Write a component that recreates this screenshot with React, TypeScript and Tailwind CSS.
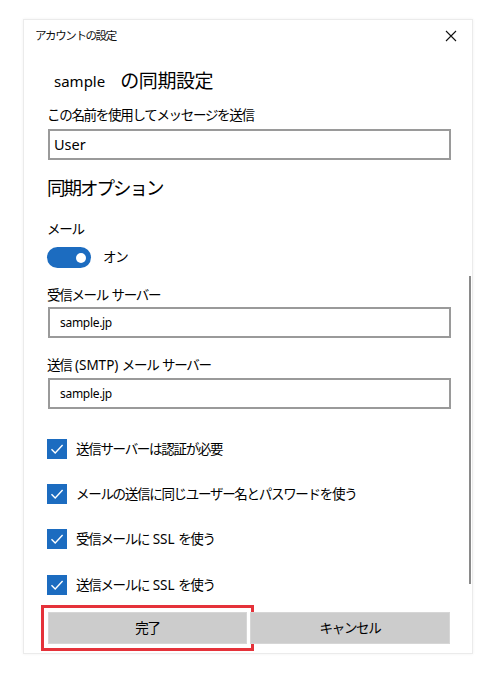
import React from "react";

function T({ text }: { text: string }) {
  const parts = text.split(/([ -~]+)/).filter((p) => p.length > 0);
  return (
    <>
      {parts.map((p, i) =>
        /^[ -~]+$/.test(p) ? (
          <span key={i} className="tracking-[0px]">
            {p}
          </span>
        ) : (
          <span key={i}>{p}</span>
        )
      )}
    </>
  );
}

function Check() {
  return (
    <div className="w-[20px] h-[20px] bg-[#1c6cc0] flex items-center justify-center shrink-0">
      <svg width="14" height="14" viewBox="0 0 14 14" fill="none">
        <path d="M1.5 7.2 L5.2 11 L12.6 3" stroke="white" strokeWidth="1.4" />
      </svg>
    </div>
  );
}

const label = "text-[13.5px] tracking-[-1.3px] text-black whitespace-pre";

function CheckRow({ text, className }: { text: string; className: string }) {
  return (
    <div className={`flex items-center h-[20px] ${className}`}>
      <Check />
      <span className={`ml-[9px] leading-[20px] ${label}`}>
        <T text={text} />
      </span>
    </div>
  );
}

function Field({ value, small }: { value: string; small?: boolean }) {
  return (
    <div className={`h-[31px] w-[403px] border-2 border-[#9a9a9a] flex items-center ${small ? "pl-[10px]" : "pl-[4px]"}`}>
      <span className={small ? "text-[12px] tracking-[-0.3px] text-black" : "text-[14.5px] text-black"}>{value}</span>
    </div>
  );
}

export default function App() {
  return (
    <div className="w-[496px] h-[674px] bg-white pt-[19px] pl-[23px] font-['Noto_Sans','Noto_Sans_CJK_JP',sans-serif]">
      <div className="relative w-[450px] h-[635px] bg-white border border-[#ebebeb] shadow-[0_0_3px_rgba(0,0,0,0.06)] flex flex-col">
        <div className="h-[31px] flex items-center justify-between pl-[11px] pr-[15px]">
          <span className="text-[11.5px] tracking-[-1.4px] text-[#111]">アカウントの設定</span>
          <svg width="12" height="12" viewBox="0 0 12 12">
            <path d="M1 1 L11 11 M11 1 L1 11" stroke="#111" strokeWidth="1.1" />
          </svg>
        </div>
        <div className="flex flex-col pl-[23px]">
          <div className="mt-[15px] h-[30px] flex items-center">
            <span className="ml-[7px] text-[15px] text-black">sample</span>
            <span className="ml-[15px] text-[19px] tracking-[-0.4px] text-black">の同期設定</span>
          </div>
          <div className={`mt-[9px] h-[20px] flex items-center ${label}`}>この名前を使用してメッセージを送信</div>
          <div className="mt-[4px] ml-[1px]">
            <Field value="User" />
          </div>
          <div className="mt-[14px] h-[28px] flex items-center text-[18.5px] tracking-[-2px] text-black">同期オプション</div>
          <div className={`mt-[17px] h-[20px] flex items-center ${label}`}>メール</div>
          <div className="mt-[8px] h-[21px] flex items-center">
            <div className="w-[44px] h-[21px] rounded-full bg-[#1c6cc0] flex items-center justify-end pr-[5px]">
              <div className="w-[10px] h-[10px] rounded-full bg-white" />
            </div>
            <span className={`ml-[12px] ${label}`}>オン</span>
          </div>
          <div className={`mt-[17px] h-[20px] flex items-center ${label}`}>
            <span>
              <T text="受信メール サーバー" />
            </span>
          </div>
          <div className="mt-[2px] ml-[1px]">
            <Field value="sample.jp" small />
          </div>
          <div className={`mt-[17px] h-[20px] flex items-center ${label}`}>
            <span>
              <T text="送信 (SMTP) メール サーバー" />
            </span>
          </div>
          <div className="mt-[3px] ml-[1px]">
            <Field value="sample.jp" small />
          </div>
          <CheckRow className="mt-[30px]" text="送信サーバーは認証が必要" />
          <CheckRow className="mt-[25px]" text="メールの送信に同じユーザー名とパスワードを使う" />
          <CheckRow className="mt-[25px]" text="受信メールに SSL を使う" />
          <CheckRow className="mt-[26px]" text="送信メールに SSL を使う" />
          <div className="mt-[17px] ml-[1px] flex gap-[3px] w-[402px]">
            <div className={`w-[199px] h-[32px] bg-[#cccccc] border border-[#d6d6d6] flex items-center justify-center outline-[3px] outline-solid outline-[#e5323a] outline-offset-[4px] ${label}`}>
              完了
            </div>
            <div className={`flex-1 h-[32px] bg-[#cccccc] border border-[#d6d6d6] flex items-center justify-center ${label}`}>
              キャンセル
            </div>
          </div>
        </div>
        <div className="absolute left-[445px] top-[256px] w-[2px] h-[308px] bg-[#8a8a8a]" />
      </div>
    </div>
  );
}
